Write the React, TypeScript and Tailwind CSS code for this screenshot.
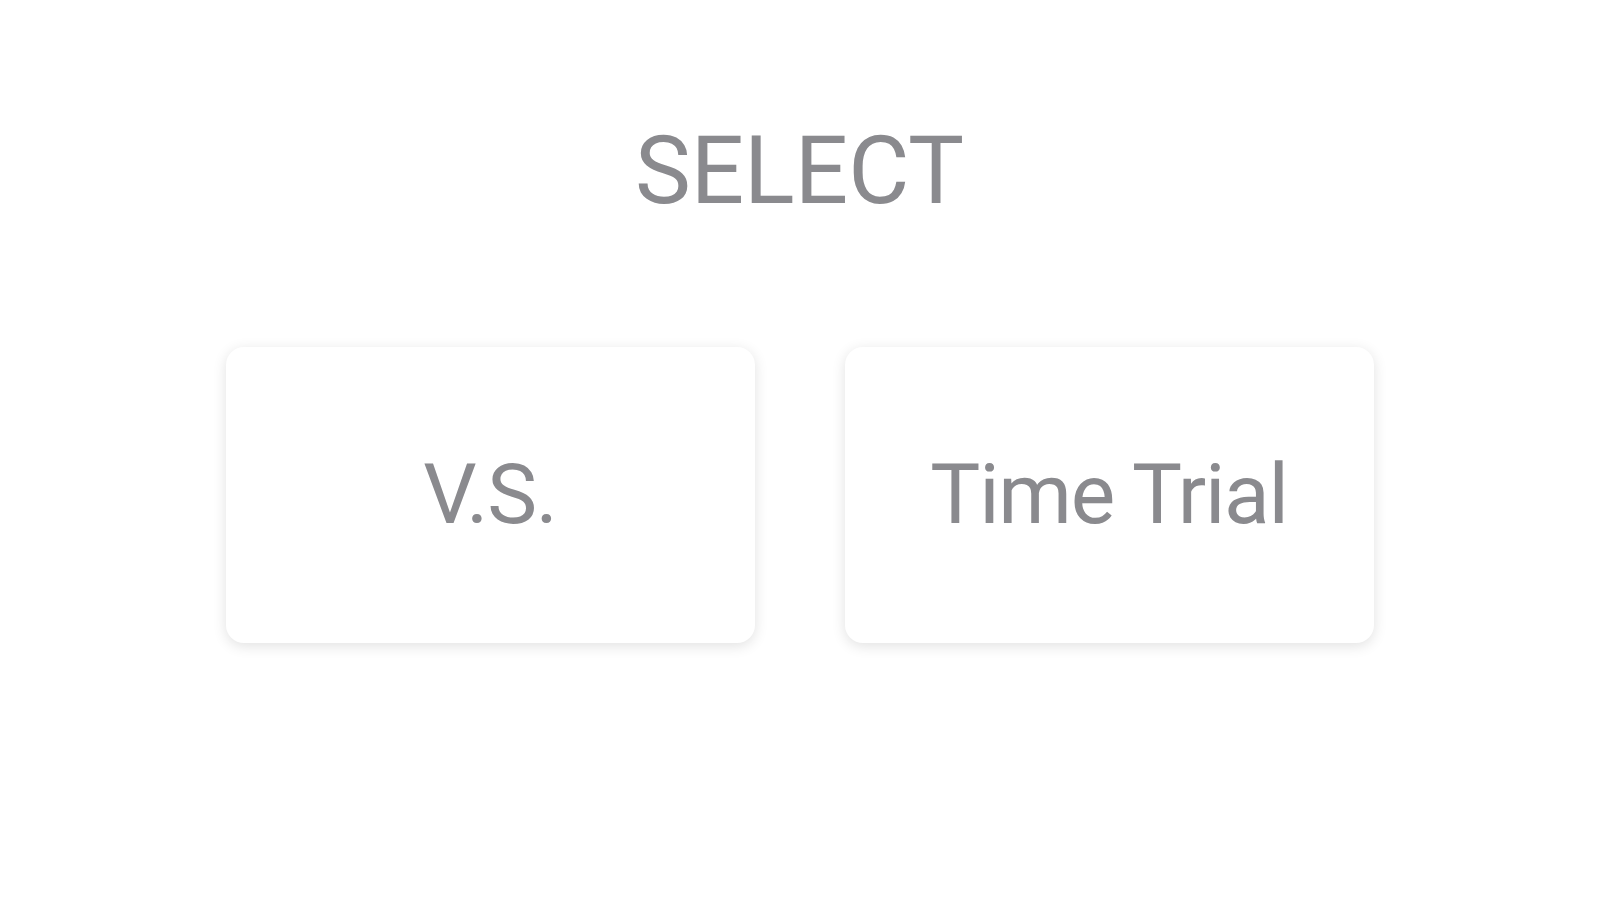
import React from 'react';

const MODES = ['V.S.', 'Time Trial'];

function App() {
  return (
    <div className="min-h-screen w-full bg-white flex flex-col items-center pt-[124px]" style={{ fontFamily: 'Roboto, "Liberation Sans", sans-serif' }}>
      <h1 className="text-[94px] leading-none font-normal text-[#8a8a8e]">SELECT</h1>

      {/* Mode cards */}
      <div className="mt-[129px] flex gap-[90px]">
        {MODES.map((mode) => (
          <button
            key={mode}
            className="w-[529px] h-[296px] rounded-[18px] bg-white shadow-[0_3px_14px_rgba(0,0,0,0.12)] flex items-center justify-center text-[84px] leading-none tracking-[-0.015em] text-[#8a8a8e]"
          >
            {mode}
          </button>
        ))}
      </div>
    </div>
  );
}

export default App;
